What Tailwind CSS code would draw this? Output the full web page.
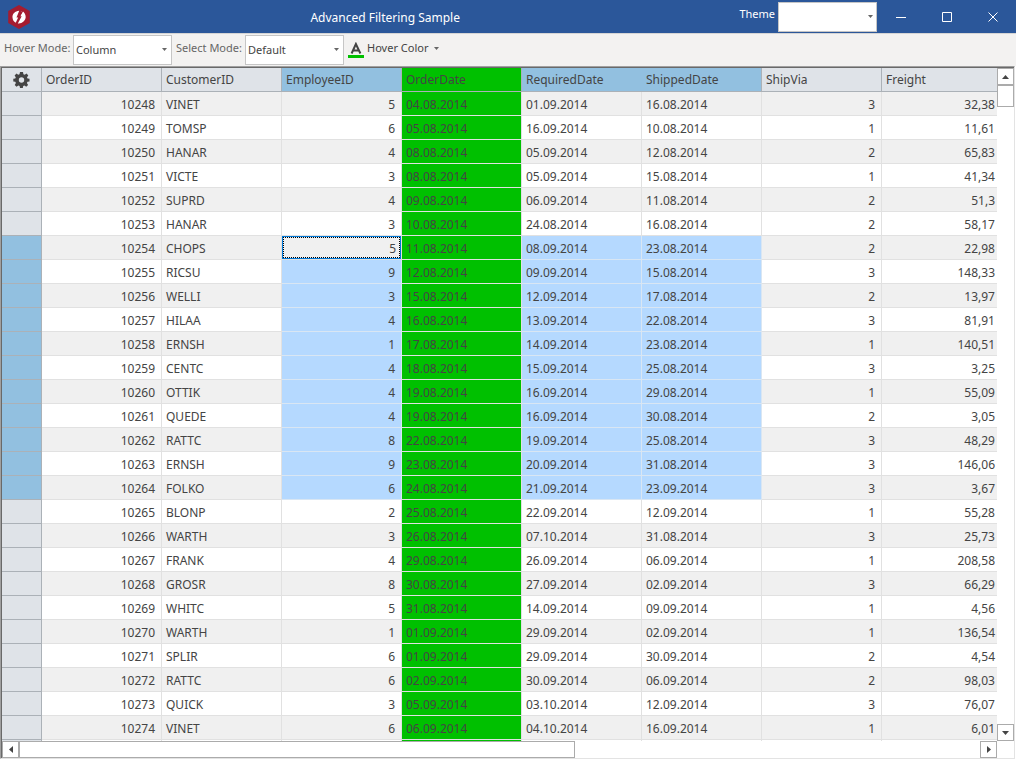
<!DOCTYPE html>
<html lang="en">
<head>
<meta charset="utf-8">
<title>Advanced Filtering Sample</title>
<script src="https://cdn.jsdelivr.net/npm/@tailwindcss/browser@4"></script>
</head>
<body class="flex h-screen flex-col overflow-hidden bg-white font-['Noto_Sans',sans-serif] text-xs text-[#444444]">
<header class="flex h-[33px] shrink-0 items-center bg-[#2b579a] text-white">
  <svg class="ml-[7px] h-6 w-6 shrink-0" viewBox="0 0 24 24" aria-hidden="true">
    <path d="M12 0 L22.8 6 V18 L12 24 L1.200 18 V6 Z" fill="#a51c30"/>
    <path d="M12.200 5.800 C8 6 5.200 9 5.500 12.600 C5.700 15 6.800 16.900 8.700 17.800 L11.200 12.400 H9.500 Z" fill="#fff"/>
    <path d="M13.400 6 L16 6.500 L13.200 11.200 H14.700 L10.800 18.400 C15 18.900 18.500 15.800 18.700 12 C18.700 9.200 17 6.700 14.800 6 Z" fill="#fff"/>
    <path d="M15 6.300 L12.600 11.600" stroke="#a51c30" stroke-width="1"/>
  </svg>
  <h1 class="min-w-0 flex-1 pt-0.5 text-center text-xs">Advanced Filtering Sample</h1>
  <label for="theme" class="mr-[3px] pb-1 text-[11px]">Theme</label>
  <div class="relative mr-px h-[30px] w-[99px]">
    <select id="theme" class="h-full w-full appearance-none border border-[#c6c6c6] bg-white px-1 text-[11px] text-[#444444]"><option></option></select>
    <svg class="pointer-events-none absolute top-[13px] right-1 h-[3px] w-[5px]" viewBox="0 0 5 3" aria-hidden="true"><path d="M0 0H5L2.500 3Z" fill="#666"/></svg>
  </div>
  <button class="flex h-full w-[46px] items-center justify-center" aria-label="Minimize"><svg class="h-[10px] w-[10px]" viewBox="0 0 10 10"><path d="M0 5.500H10" stroke="#fff"/></svg></button>
  <button class="flex h-full w-[46px] items-center justify-center" aria-label="Maximize"><svg class="h-[10px] w-[10px]" viewBox="0 0 10 10"><path d="M.5.500H9.500V9.500H.5Z" fill="none" stroke="#fff"/></svg></button>
  <button class="flex h-full w-[46px] items-center justify-center" aria-label="Close"><svg class="h-[10px] w-[10px]" viewBox="0 0 10 10"><path d="M.5.500L9.500 9.500M9.500.500L.5 9.500" stroke="#fff"/></svg></button>
</header>

<div class="flex h-[33px] shrink-0 items-center border-t border-[#d5d5d5] bg-[#f3f2f1] text-[11px]">
  <label for="hover" class="w-[73px] pb-1 pl-1 whitespace-nowrap text-[#666666]">Hover Mode:</label>
  <div class="relative h-[30px] w-[99px]">
    <select id="hover" class="h-full w-full appearance-none border border-[#c6c6c6] bg-white px-[2px] text-[11px] text-[#444444]"><option>Column</option></select>
    <svg class="pointer-events-none absolute top-[13px] right-[5px] h-[3px] w-[5px]" viewBox="0 0 5 3" aria-hidden="true"><path d="M0 0H5L2.500 3Z" fill="#666"/></svg>
  </div>
  <label for="select" class="w-[73px] pb-1 pl-1 whitespace-nowrap text-[#666666]">Select Mode:</label>
  <div class="relative h-[30px] w-[99px]">
    <select id="select" class="h-full w-full appearance-none border border-[#c6c6c6] bg-white px-[2px] text-[11px] text-[#444444]"><option>Default</option></select>
    <svg class="pointer-events-none absolute top-[13px] right-[5px] h-[3px] w-[5px]" viewBox="0 0 5 3" aria-hidden="true"><path d="M0 0H5L2.500 3Z" fill="#666"/></svg>
  </div>
  <button class="ml-1 flex items-center">
    <svg class="h-4 w-4" viewBox="0 0 16 16" aria-hidden="true"><path d="M0 13H16V16H0Z" fill="#00c000"/><path d="M3.600 11.500L7.900 2L12.400 11.500M5.300 8.500H10.600" fill="none" stroke="#444" stroke-width="2"/></svg>
    <span class="ml-[3px] pb-1">Hover Color</span>
    <span class="ml-1.5 pb-1"><svg class="h-[3px] w-[5px]" viewBox="0 0 5 3" aria-hidden="true"><path d="M0 0H5L2.500 3Z" fill="#666"/></svg></span>
  </button>
</div>

<main class="mr-px mb-px flex min-h-0 flex-1 flex-col border border-t-[#a0a0a0] border-r-[#e3e3e3] border-b-[#e3e3e3] border-l-[#a0a0a0]">
  <div class="flex min-h-0 flex-1 flex-col border-t border-l border-[#696969]">
    <div class="flex min-h-0 flex-1">
      <div class="min-w-0 flex-1 overflow-hidden">
        <table class="w-[1000px] table-fixed border-separate border-spacing-0">
          <thead>
            <tr class="h-6 text-left leading-4">
              <th class="w-10 border-r border-b border-[#abb1b7] bg-[#dfe3e8] p-0">
                <button class="flex w-full items-center justify-center" aria-label="Options"><svg class="h-4 w-[17px]" viewBox="0 0 16 16"><path fill="#444" fill-rule="evenodd" d="M6.500 0h3l.4 2.200 1.300.6L13.100 1.500l1.700 2-1.300 1.800.5 1.200 2 .3v2.600l-2 .4-.6 1.300 1.200 1.800-1.900 1.800-1.700-1.200-1.300.5-.4 2h-2.800l-.4-2-1.300-.5-1.700 1.200-1.900-1.800 1.200-1.800-.6-1.300-2-.4V6.800l2-.3.5-1.200-1.200-1.800 1.900-2 1.700 1.300 1.300-.6ZM8 5.300a2.700 2.700 0 1 0 0 5.400a2.700 2.700 0 0 0 0-5.400Z"/></svg></button>
              </th>
              <th class="border-r border-b border-[#abb1b7] bg-[#dfe3e8] px-1 pt-px pb-0 font-normal">OrderID</th>
              <th class="border-r border-b border-[#abb1b7] bg-[#dfe3e8] px-1 pt-px pb-0 font-normal">CustomerID</th>
              <th class="border-r border-b border-[#abb1b7] bg-[#92c0e0] px-1 pt-px pb-0 font-normal">EmployeeID</th>
              <th class="border-r border-b border-[#abb1b7] bg-[#00c000] px-1 pt-px pb-0 font-normal">OrderDate</th>
              <th class="border-b border-[#abb1b7] bg-[#92c0e0] px-1 pt-px pb-0 font-normal">RequiredDate</th>
              <th class="border-r border-b border-[#abb1b7] bg-[#92c0e0] px-1 pt-px pb-0 font-normal">ShippedDate</th>
              <th class="border-r border-b border-[#abb1b7] bg-[#dfe3e8] px-1 pt-px pb-0 font-normal">ShipVia</th>
              <th class="border-r border-b border-[#abb1b7] bg-[#dfe3e8] px-1 pt-px pb-0 font-normal">Freight</th>
            </tr>
          </thead>
          <tbody id="rows"></tbody>
        </table>
      </div>
      <div class="flex w-[17px] shrink-0 flex-col bg-white">
        <button class="flex h-[17px] items-center justify-center border border-[#ababab]" aria-label="Scroll up"><svg class="h-1 w-[7px]" viewBox="0 0 7 4"><path d="M0 4H7L3.500 0Z" fill="#444"/></svg></button>
        <div class="h-[22px] border border-[#ababab]"></div>
        <div class="flex-1"></div>
        <button class="flex h-[17px] items-center justify-center border border-[#ababab]" aria-label="Scroll down"><svg class="h-1 w-[7px]" viewBox="0 0 7 4"><path d="M0 0H7L3.500 4Z" fill="#444"/></svg></button>
      </div>
    </div>
    <div class="mr-[17px] flex h-[17px] shrink-0 bg-white">
      <button class="flex w-[17px] items-center justify-center border border-[#ababab]" aria-label="Scroll left"><svg class="h-[7px] w-1" viewBox="0 0 4 7"><path d="M4 0V7L0 3.500Z" fill="#444"/></svg></button>
      <div class="w-[556px] border border-[#ababab]"></div>
      <div class="flex-1"></div>
      <button class="flex w-[17px] items-center justify-center border border-[#ababab]" aria-label="Scroll right"><svg class="h-[7px] w-1" viewBox="0 0 4 7"><path d="M0 0V7L4 3.500Z" fill="#444"/></svg></button>
    </div>
  </div>
</main>

<script>
const data = `10248 VINET 5 04.08.2014 01.09.2014 16.08.2014 3 32,38
10249 TOMSP 6 05.08.2014 16.09.2014 10.08.2014 1 11,61
10250 HANAR 4 08.08.2014 05.09.2014 12.08.2014 2 65,83
10251 VICTE 3 08.08.2014 05.09.2014 15.08.2014 1 41,34
10252 SUPRD 4 09.08.2014 06.09.2014 11.08.2014 2 51,3
10253 HANAR 3 10.08.2014 24.08.2014 16.08.2014 2 58,17
10254 CHOPS 5 11.08.2014 08.09.2014 23.08.2014 2 22,98
10255 RICSU 9 12.08.2014 09.09.2014 15.08.2014 3 148,33
10256 WELLI 3 15.08.2014 12.09.2014 17.08.2014 2 13,97
10257 HILAA 4 16.08.2014 13.09.2014 22.08.2014 3 81,91
10258 ERNSH 1 17.08.2014 14.09.2014 23.08.2014 1 140,51
10259 CENTC 4 18.08.2014 15.09.2014 25.08.2014 3 3,25
10260 OTTIK 4 19.08.2014 16.09.2014 29.08.2014 1 55,09
10261 QUEDE 4 19.08.2014 16.09.2014 30.08.2014 2 3,05
10262 RATTC 8 22.08.2014 19.09.2014 25.08.2014 3 48,29
10263 ERNSH 9 23.08.2014 20.09.2014 31.08.2014 3 146,06
10264 FOLKO 6 24.08.2014 21.09.2014 23.09.2014 3 3,67
10265 BLONP 2 25.08.2014 22.09.2014 12.09.2014 1 55,28
10266 WARTH 3 26.08.2014 07.10.2014 31.08.2014 3 25,73
10267 FRANK 4 29.08.2014 26.09.2014 06.09.2014 1 208,58
10268 GROSR 8 30.08.2014 27.09.2014 02.09.2014 3 66,29
10269 WHITC 5 31.08.2014 14.09.2014 09.09.2014 1 4,56
10270 WARTH 1 01.09.2014 29.09.2014 02.09.2014 1 136,54
10271 SPLIR 6 01.09.2014 29.09.2014 30.09.2014 2 4,54
10272 RATTC 6 02.09.2014 30.09.2014 06.09.2014 2 98,03
10273 QUICK 3 05.09.2014 03.10.2014 12.09.2014 3 76,07
10274 VINET 6 06.09.2014 04.10.2014 16.09.2014 1 6,01`.split("\n").map(line => line.split(" "));
data.push(["", "", "", "", "", "", "", ""]);

const numeric = [0, 2, 6, 7];
document.getElementById("rows").innerHTML = data.map((row, r) => {
  const chosen = r >= 6 && r <= 16;
  const head = `<th class="border-r border-b border-[#abb1b7] p-0 ${chosen ? "bg-[#92c0e0]" : "bg-[#dfe3e8]"}"></th>`;
  const cells = row.map((text, c) => {
    const align = numeric.includes(c) ? "pl-1 pr-1.5 text-right" : "px-1 text-left";
    if (r === 6 && c === 2) {
      return `<td class="border-r border-b border-[#e1e1e1] p-0 text-right"><div class="h-[23px] border border-[#0078d7] bg-white"><div class="h-[21px] border border-dotted border-black bg-[#f0f0f0] pt-[3px] pr-[3px]">${text}</div></div></td>`;
    }
    let fill = r % 2 ? "bg-white border-[#e1e1e1]" : "bg-[#f0f0f0] border-[#e1e1e1]";
    if (chosen && (c === 2 || c === 4 || c === 5)) fill = "bg-[#b5d9ff] border-[#d9e6f3]";
    if (c === 3) fill = "bg-[#00c000] border-[#e1e1e1]";
    return `<td class="border-r border-b pt-0.5 pb-0 ${align} ${fill}">${text}</td>`;
  }).join("");
  return `<tr class="h-6 leading-4">${head}${cells}</tr>`;
}).join("");
</script>
</body>
</html>
